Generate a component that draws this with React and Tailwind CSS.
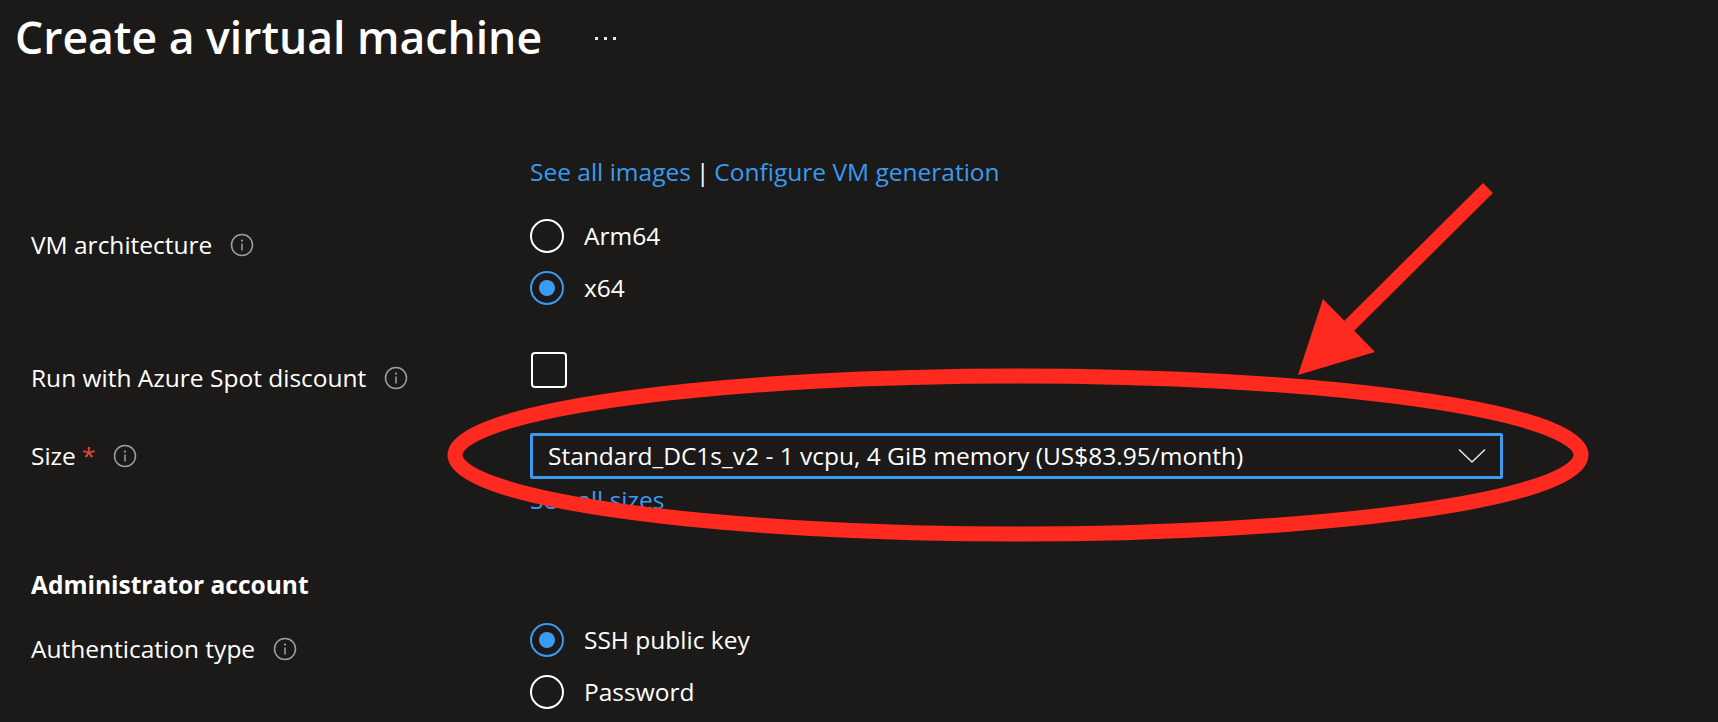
function InfoIcon() {
  return (
    <svg width="24" height="24" viewBox="0 0 24 24" className="ml-[18px] shrink-0">
      <circle cx="12" cy="12" r="10.5" fill="none" stroke="#a19f9d" strokeWidth="1.5" />
      <circle cx="12" cy="7.6" r="1.1" fill="#a19f9d" />
      <path d="M12 10.5v7" stroke="#a19f9d" strokeWidth="1.5" />
    </svg>
  )
}

function Radio({ label, checked }) {
  return (
    <div className="flex h-[36px] items-center">
      <div
        className={`flex h-[34px] w-[34px] items-center justify-center rounded-full border-[2.5px] ${
          checked ? 'border-[#3a9bf0]' : 'border-white'
        }`}
      >
        {checked && <div className="h-[16px] w-[16px] rounded-full bg-[#3a9bf0]" />}
      </div>
      <span className="ml-[20px]">{label}</span>
    </div>
  )
}

function Label({ children, className = '' }) {
  return <div className={`flex w-[499px] shrink-0 items-center ${className}`}>{children}</div>
}

function Annotations() {
  return (
    <svg className="pointer-events-none absolute left-0 top-0" width="1718" height="722">
      <ellipse cx="1018" cy="455" rx="563" ry="79" fill="none" stroke="#ff2a1f" strokeWidth="15" />
      <line x1="1488" y1="188" x2="1345" y2="330" stroke="#ff2a1f" strokeWidth="14" />
      <polygon points="1298,375 1323,299 1375,352" fill="#ff2a1f" />
    </svg>
  )
}

export default function App() {
  return (
    <div
      className="relative h-[722px] w-[1718px] overflow-hidden bg-[#1b1a19] text-[24.5px] text-white"
      style={{ fontFamily: '"Open Sans", "Noto Sans", sans-serif' }}
    >
      <div className="flex h-[74px] items-center pl-[15px]">
        <h1 className="text-[44.5px] font-semibold leading-none">Create a virtual machine</h1>
        <div className="ml-[53px] flex gap-[6px] pt-[2px]">
          <span className="h-[3px] w-[3px] bg-white/90" />
          <span className="h-[3px] w-[3px] bg-white/90" />
          <span className="h-[3px] w-[3px] bg-white/90" />
        </div>
      </div>

      <div className="pl-[31px]">
        <div className="mt-[80px] flex h-[36px] items-center pl-[499px]">
          <span className="text-[#3a9bf0]">See all images</span>
          <span className="mx-[5px]">|</span>
          <span className="text-[#3a9bf0]">Configure VM generation</span>
        </div>

        <div className="mt-[28px] flex">
          <Label className="h-[36px] self-start pt-[18px]">
            VM architecture
            <InfoIcon />
          </Label>
          <div className="flex flex-col gap-[16px]">
            <Radio label="Arm64" />
            <Radio label="x64" checked />
          </div>
        </div>

        <div className="mt-[46px] flex">
          <Label className="h-[36px] pt-[16px]">
            Run with Azure Spot discount
            <InfoIcon />
          </Label>
          <div className="ml-[1px] h-[36px] w-[36px] rounded-[4px] border-[2.5px] border-white" />
        </div>

        <div className="mt-[45px] flex items-center">
          <Label className="h-[46px]">
            Size
            <span className="ml-[6px] text-[#ef4444]">*</span>
            <InfoIcon />
          </Label>
          <div className="flex h-[46px] w-[973px] items-center justify-between rounded-[2px] border-[3px] border-[#3a9bf0] pl-[15px] pr-[14px]">
            <span>Standard_DC1s_v2 - 1 vcpu, 4 GiB memory (US$83.95/month)</span>
            <svg width="28" height="16" viewBox="0 0 28 16">
              <polyline points="1,1.5 14,14 27,1.5" fill="none" stroke="#e8e8e8" strokeWidth="1.5" />
            </svg>
          </div>
        </div>

        <div className="mt-[3px] flex h-[36px] items-center pl-[499px] text-[#3a9bf0]">See all sizes</div>

        <div className="mt-[49px] flex h-[36px] items-center font-bold">Administrator account</div>

        <div className="mt-[19px] flex">
          <Label className="h-[36px] self-start pt-[18px]">
            Authentication type
            <InfoIcon />
          </Label>
          <div className="flex flex-col gap-[16px]">
            <Radio label="SSH public key" checked />
            <Radio label="Password" />
          </div>
        </div>
      </div>

      <Annotations />
    </div>
  )
}
